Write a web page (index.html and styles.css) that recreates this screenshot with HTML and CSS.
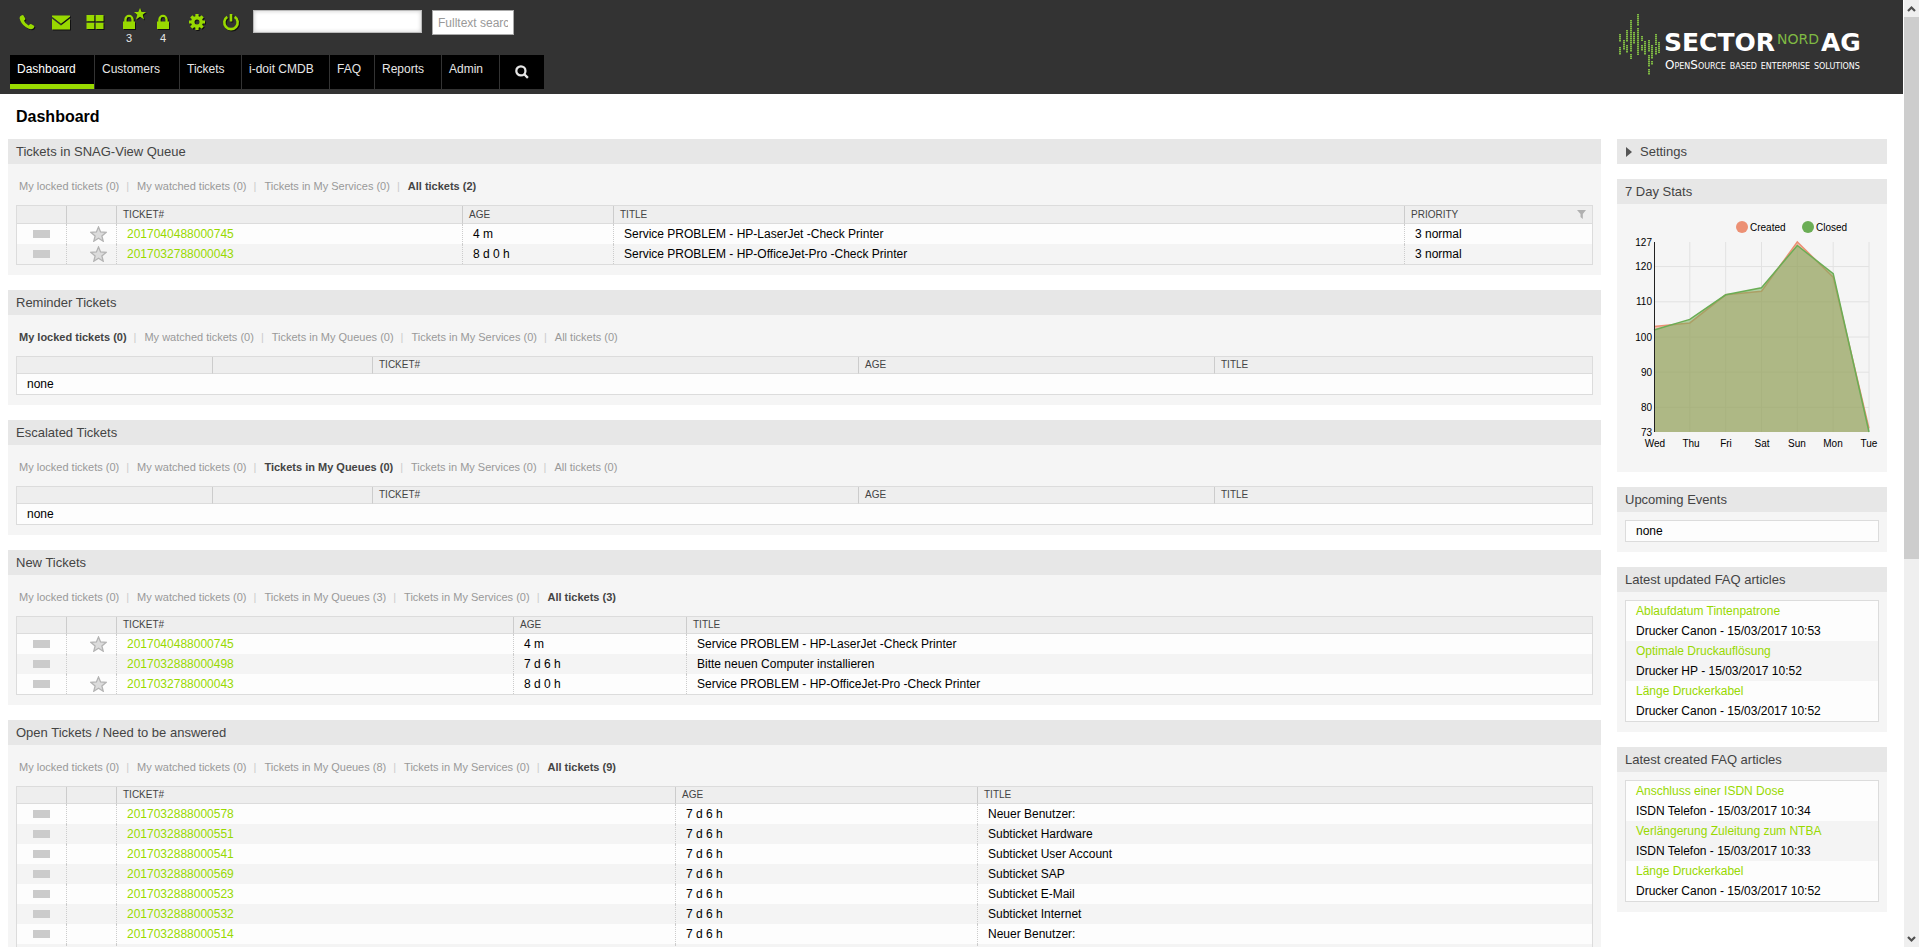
FILE: index.html
```html
<!DOCTYPE html>
<html lang="en">
<head>
<meta charset="utf-8">
<title>Dashboard</title>
<link rel="stylesheet" href="styles.css">
</head>
<body>
<svg class="defs" aria-hidden="true">
  <symbol id="star" viewBox="0 0 17 16"><path d="M8.500 1l2.100 5 5.400.4-4.100 3.500 1.300 5.300-4.700-2.900-4.700 2.900 1.300-5.300L1 6.400 6.400 6z" fill="#dcdcdc" stroke="#b3b3b3" stroke-width="1.300"/></symbol>
</svg>
<div class="window">
<div class="page">
  <header class="top">
    <div>
      <div class="toolbar">
        <a class="tool" href="#" aria-label="Phone"><svg viewBox="0 0 18 18"><path d="M2 3.500Q4.500 1 5.500 2.500l1.800 3q.6 1-1.300 2.300 1.300 3 4.600 4.600Q12 10.500 13 11l3 1.800q1 .7-.5 2.400-2 1.800-4.700.6Q4.500 13 2.300 7.500 1 5 2 3.500z"/></svg></a>
        <a class="tool" href="#" aria-label="Mail"><svg viewBox="0 0 18 18"><path d="M0 2.500h18v1.300l-9 7-9-7z"/><path d="M0 5.600l9 6.900 9-6.900V16.500H0z"/></svg></a>
        <a class="tool" href="#" aria-label="Overview"><svg viewBox="0 0 18 18"><path d="M.5 2h7.800v6.300H.5zM9.700 2h7.800v6.300H9.700zM.5 9.700h7.800V16H.5zM9.700 9.700h7.800V16H9.700z"/></svg></a>
        <a class="tool" href="#" aria-label="Locked tickets new"><svg viewBox="0 0 18 18"><path d="M3 8.500h1.300V6.500a4.700 4.700 0 0 1 9.400 0v2H15V16H3zM6.600 8.500h4.800V6.500a2.400 2.400 0 0 0-4.800 0z"/></svg><svg class="tool-star" viewBox="0 0 12 12"><path d="M6 0l1.700 4H12L8.700 6.800 10 11.500 6 8.800 2 11.500l1.300-4.700L0 4h4.300z"/></svg><span>3</span></a>
        <a class="tool" href="#" aria-label="Locked tickets"><svg viewBox="0 0 18 18"><path d="M3 8.500h1.300V6.500a4.700 4.700 0 0 1 9.400 0v2H15V16H3zM6.600 8.500h4.800V6.500a2.400 2.400 0 0 0-4.800 0z"/></svg><span>4</span></a>
        <a class="tool" href="#" aria-label="Preferences"><svg viewBox="0 0 18 18"><g fill="none" stroke="#98d900"><circle cx="9" cy="9" r="4.200" stroke-width="3.400"/><path d="M9 1v3M9 14v3M1 9h3M14 9h3M3.300 3.300l2.200 2.200M12.500 12.500l2.200 2.200M3.300 14.700l2.200-2.200M12.500 5.500l2.200-2.200" stroke-width="3.200"/></g></svg></a>
        <a class="tool" href="#" aria-label="Log out"><svg viewBox="0 0 18 18"><path d="M5.300 3.800A6.700 6.700 0 1 0 12.700 3.800M9 1v7.500" fill="none" stroke="#98d900" stroke-width="2.600"/></svg></a>
        <input class="search-main" type="text" aria-label="Search">
        <input class="search-full" type="text" placeholder="Fulltext search" aria-label="Fulltext search">
      </div>
      <nav class="nav">
        <a class="active" href="#">Dashboard</a><a href="#">Customers</a><a href="#">Tickets</a><a href="#">i-doit CMDB</a><a href="#">FAQ</a><a href="#">Reports</a><a href="#">Admin</a>
        <a class="nav-search" href="#" aria-label="Search"><svg viewBox="0 0 15 15"><g fill="none" stroke="#e6e6e6" stroke-width="2.400"><circle cx="6.300" cy="6.300" r="4.900"/><path d="M9.800 9.800l4 4"/></g></svg></a>
      </nav>
    </div>
    <svg class="logo" viewBox="0 0 244 66" role="img" aria-label="Sector Nord AG">
      <path fill="none" stroke="#7fb943" stroke-width="2" stroke-dasharray="1.400 .6" d="M1 22v8M1 35v8M5 28v10M8 18v12M8 33v8M12 8v32M12 42v5M15 20v12M19 2v12M19 16v27M23 24v5M23 33v6M26 29v14M30 28v12M30 43v12M30 57v6M33 33v14M33 49v4M37 22v11M37 35v8M40 30v11"/>
      <text class="logo-big" x="45" y="39">SECTOR</text>
      <text class="logo-nord" x="158" y="32">NORD</text>
      <text class="logo-big" x="202" y="39">AG</text>
      <text class="logo-line" x="46" y="57">OpenSource based enterprise solutions</text>
    </svg>
  </header>
  <h1>Dashboard</h1>
  <div class="columns">
    <main class="stack">
      <section class="widget">
        <h2>Tickets in SNAG-View Queue</h2>
        <div class="filters"><a href="#">My locked tickets (0)</a><a href="#">My watched tickets (0)</a><a href="#">Tickets in My Services (0)</a><a class="on" href="#">All tickets (2)</a></div>
        <table class="tickets queue">
          <colgroup><col class="flag"><col class="flag"><col class="num"><col class="age"><col><col class="prio"></colgroup>
          <thead><tr><th></th><th></th><th>TICKET#</th><th>AGE</th><th>TITLE</th><th><div class="sortable">PRIORITY<svg viewBox="0 0 9 9"><path d="M0 0h9L5.800 4v5L3.500 7V4z" fill="#b0b0b0"/></svg></div></th></tr></thead>
          <tbody>
            <tr><td><i class="bar"></i></td><td><svg class="star"><use href="#star"/></svg></td><td><a href="#">2017040488000745</a></td><td>4 m</td><td>Service PROBLEM - HP-LaserJet -Check Printer</td><td>3 normal</td></tr>
            <tr><td><i class="bar"></i></td><td><svg class="star"><use href="#star"/></svg></td><td><a href="#">2017032788000043</a></td><td>8 d 0 h</td><td>Service PROBLEM - HP-OfficeJet-Pro -Check Printer</td><td>3 normal</td></tr>
          </tbody>
        </table>
      </section>
      <section class="widget">
        <h2>Reminder Tickets</h2>
        <div class="filters"><a class="on" href="#">My locked tickets (0)</a><a href="#">My watched tickets (0)</a><a href="#">Tickets in My Queues (0)</a><a href="#">Tickets in My Services (0)</a><a href="#">All tickets (0)</a></div>
        <table class="tickets empty">
          <colgroup><col class="flag"><col class="flag2"><col class="num"><col class="age"><col></colgroup>
          <thead><tr><th></th><th></th><th>TICKET#</th><th>AGE</th><th>TITLE</th></tr></thead>
          <tbody><tr><td colspan="5">none</td></tr></tbody>
        </table>
      </section>
      <section class="widget">
        <h2>Escalated Tickets</h2>
        <div class="filters"><a href="#">My locked tickets (0)</a><a href="#">My watched tickets (0)</a><a class="on" href="#">Tickets in My Queues (0)</a><a href="#">Tickets in My Services (0)</a><a href="#">All tickets (0)</a></div>
        <table class="tickets empty">
          <colgroup><col class="flag"><col class="flag2"><col class="num"><col class="age"><col></colgroup>
          <thead><tr><th></th><th></th><th>TICKET#</th><th>AGE</th><th>TITLE</th></tr></thead>
          <tbody><tr><td colspan="5">none</td></tr></tbody>
        </table>
      </section>
      <section class="widget">
        <h2>New Tickets</h2>
        <div class="filters"><a href="#">My locked tickets (0)</a><a href="#">My watched tickets (0)</a><a href="#">Tickets in My Queues (3)</a><a href="#">Tickets in My Services (0)</a><a class="on" href="#">All tickets (3)</a></div>
        <table class="tickets new">
          <colgroup><col class="flag"><col class="flag"><col class="num"><col class="age"><col></colgroup>
          <thead><tr><th></th><th></th><th>TICKET#</th><th>AGE</th><th>TITLE</th></tr></thead>
          <tbody>
            <tr><td><i class="bar"></i></td><td><svg class="star"><use href="#star"/></svg></td><td><a href="#">2017040488000745</a></td><td>4 m</td><td>Service PROBLEM - HP-LaserJet -Check Printer</td></tr>
            <tr><td><i class="bar"></i></td><td></td><td><a href="#">2017032888000498</a></td><td>7 d 6 h</td><td>Bitte neuen Computer installieren</td></tr>
            <tr><td><i class="bar"></i></td><td><svg class="star"><use href="#star"/></svg></td><td><a href="#">2017032788000043</a></td><td>8 d 0 h</td><td>Service PROBLEM - HP-OfficeJet-Pro -Check Printer</td></tr>
          </tbody>
        </table>
      </section>
      <section class="widget">
        <h2>Open Tickets / Need to be answered</h2>
        <div class="filters"><a href="#">My locked tickets (0)</a><a href="#">My watched tickets (0)</a><a href="#">Tickets in My Queues (8)</a><a href="#">Tickets in My Services (0)</a><a class="on" href="#">All tickets (9)</a></div>
        <table class="tickets open">
          <colgroup><col class="flag"><col class="flag"><col class="num"><col class="age"><col></colgroup>
          <thead><tr><th></th><th></th><th>TICKET#</th><th>AGE</th><th>TITLE</th></tr></thead>
          <tbody>
            <tr><td><i class="bar"></i></td><td></td><td><a href="#">2017032888000578</a></td><td>7 d 6 h</td><td>Neuer Benutzer:</td></tr>
            <tr><td><i class="bar"></i></td><td></td><td><a href="#">2017032888000551</a></td><td>7 d 6 h</td><td>Subticket Hardware</td></tr>
            <tr><td><i class="bar"></i></td><td></td><td><a href="#">2017032888000541</a></td><td>7 d 6 h</td><td>Subticket User Account</td></tr>
            <tr><td><i class="bar"></i></td><td></td><td><a href="#">2017032888000569</a></td><td>7 d 6 h</td><td>Subticket SAP</td></tr>
            <tr><td><i class="bar"></i></td><td></td><td><a href="#">2017032888000523</a></td><td>7 d 6 h</td><td>Subticket E-Mail</td></tr>
            <tr><td><i class="bar"></i></td><td></td><td><a href="#">2017032888000532</a></td><td>7 d 6 h</td><td>Subticket Internet</td></tr>
            <tr><td><i class="bar"></i></td><td></td><td><a href="#">2017032888000514</a></td><td>7 d 6 h</td><td>Neuer Benutzer:</td></tr>
            <tr><td></td><td></td><td></td><td></td><td></td></tr>
          </tbody>
        </table>
      </section>
    </main>
    <aside class="stack side">
      <section class="widget closed">
        <h2><svg class="caret" viewBox="0 0 6 10"><path d="M0 0l6 5-6 5z" fill="#555"/></svg>Settings</h2>
      </section>
      <section class="widget chart">
        <h2>7 Day Stats</h2>
        <svg viewBox="0 0 270 268" role="img" aria-label="Tickets created and closed per day">
          <circle cx="125" cy="23" r="6" fill="#ec9074"/><text x="133" y="27">Created</text>
          <circle cx="191" cy="23" r="6" fill="#6bad55"/><text x="199" y="27">Closed</text>
          <path class="grid" d="M37 62.600H252M37 97.800H252M37 133H252M37 168.200H252M37 203.400H252M72.800 38V228M108.700 38V228M144.500 38V228M180.300 38V228M216.200 38V228M252 38V228"/>
          <path fill="#ec9074" fill-opacity=".5" d="M37 122.400L72.800 118.900 108.700 90.800 144.500 87.300 180.300 38 216.200 73.200 252 224.500V228H37z"/>
          <path fill="none" stroke="#ec9074" stroke-width="1.500" d="M37 122.400L72.800 118.900 108.700 90.800 144.500 87.300 180.300 38 216.200 73.200 252 224.500"/>
          <path fill="#6bad55" fill-opacity=".5" d="M37 126L72.800 115.400 108.700 90.800 144.500 83.700 180.300 41.500 216.200 69.700 252 228H37z"/>
          <path fill="none" stroke="#6bad55" stroke-width="1.500" d="M37 126L72.800 115.400 108.700 90.800 144.500 83.700 180.300 41.500 216.200 69.700 252 228"/>
          <path d="M37.500 38V228" stroke="#222"/>
          <g text-anchor="end"><text x="35" y="42">127</text><text x="35" y="66">120</text><text x="35" y="101">110</text><text x="35" y="137">100</text><text x="35" y="172">90</text><text x="35" y="207">80</text><text x="35" y="232">73</text></g>
          <g text-anchor="middle"><text x="38" y="243">Wed</text><text x="74" y="243">Thu</text><text x="109" y="243">Fri</text><text x="145" y="243">Sat</text><text x="180" y="243">Sun</text><text x="216" y="243">Mon</text><text x="252" y="243">Tue</text></g>
        </svg>
      </section>
      <section class="widget">
        <h2>Upcoming Events</h2>
        <ul class="list"><li>none</li></ul>
      </section>
      <section class="widget">
        <h2>Latest updated FAQ articles</h2>
        <ul class="list">
          <li><a href="#">Ablaufdatum Tintenpatrone</a><span>Drucker Canon - 15/03/2017 10:53</span></li>
          <li><a href="#">Optimale Druckauflösung</a><span>Drucker HP - 15/03/2017 10:52</span></li>
          <li><a href="#">Länge Druckerkabel</a><span>Drucker Canon - 15/03/2017 10:52</span></li>
        </ul>
      </section>
      <section class="widget">
        <h2>Latest created FAQ articles</h2>
        <ul class="list">
          <li><a href="#">Anschluss einer ISDN Dose</a><span>ISDN Telefon - 15/03/2017 10:34</span></li>
          <li><a href="#">Verlängerung Zuleitung zum NTBA</a><span>ISDN Telefon - 15/03/2017 10:33</span></li>
          <li><a href="#">Länge Druckerkabel</a><span>Drucker Canon - 15/03/2017 10:52</span></li>
        </ul>
      </section>
    </aside>
  </div>
</div>
<div class="scrollbar" aria-hidden="true">
  <svg viewBox="0 0 15 17"><path d="M4 11l3.500-3.500L11 11" fill="none" stroke="#505050" stroke-width="2.200"/></svg>
  <div class="track"><div class="thumb"></div></div>
  <svg viewBox="0 0 15 17"><path d="M4 7l3.500 3.500L11 7" fill="none" stroke="#505050" stroke-width="2.200"/></svg>
</div>
</div>
</body>
</html>
```
FILE: styles.css
```css
* { box-sizing: border-box; }

body {
  margin: 0;
  background: #fff;
  color: #000;
  font: 12px/20px "Liberation Sans", Arial, sans-serif;
}

a { color: #98d900; text-decoration: none; }

.defs { display: none; }

.window {
  display: flex;
  height: 100vh;
  overflow: hidden;
}

.page { flex: 1; min-width: 0; }

/* header */
.top {
  display: flex;
  justify-content: space-between;
  align-items: flex-start;
  height: 94px;
  padding: 10px 40px 0 10px;
  background: #333;
}

.toolbar {
  display: flex;
  align-items: flex-start;
  height: 45px;
}

.tool {
  position: relative;
  display: flex;
  flex-direction: column;
  align-items: center;
  width: 34px;
  padding-top: 3px;
  color: #e6e6e6;
  font-size: 11px;
  line-height: 15px;
}

.tool svg {
  width: 18px;
  height: 18px;
  fill: #98d900;
  filter: drop-shadow(1px 1px 0 #111);
}

.tool .tool-star {
  position: absolute;
  top: -2px;
  right: 0;
  width: 12px;
  height: 12px;
}

.search-main,
.search-full {
  border: 1px solid #aaa;
  background: #fff;
  font: 12px "Liberation Sans", Arial, sans-serif;
}

.search-main {
  width: 169px;
  height: 23px;
  margin-left: 5px;
  border: 1px solid #bbb;
  box-shadow: inset 0 0 4px #ccc;
}

.search-full {
  width: 82px;
  height: 25px;
  margin-left: 10px;
  padding: 0 5px;
}

.search-full::placeholder { color: #999; }

.nav {
  display: grid;
  grid-template-columns: 84px 85px 62px 88px 45px 67px 58px 45px;
  height: 34px;
  background: #000;
}

.nav a {
  padding: 4px 0 0 7px;
  border-left: 1px solid #333;
  color: #e6e6e6;
}

.nav .active {
  border-left: 0;
  border-bottom: 5px solid #98d900;
  color: #fff;
}

.nav .nav-search {
  display: flex;
  align-items: center;
  justify-content: center;
  padding: 0;
}

.nav-search svg { width: 14px; height: 14px; }

.logo { width: 244px; height: 66px; margin-top: 2px; }

.logo text { font-family: "DejaVu Sans", sans-serif; fill: #fff; }
.logo .logo-big { font-size: 25px; font-weight: bold; }
.logo .logo-nord { font-size: 14px; fill: #7fb943; }
.logo .logo-line { font-size: 12px; font-variant: small-caps; }

/* content */
h1 {
  margin: 0;
  padding: 13px 16px 12px;
  font-size: 16px;
  line-height: 20px;
}

.columns {
  display: flex;
  align-items: flex-start;
  gap: 16px;
  padding: 0 16px 0 8px;
}

.stack {
  display: flex;
  flex-direction: column;
  gap: 15px;
  flex: 1;
  min-width: 0;
}

.side { flex: 0 0 270px; }

.widget {
  padding-bottom: 10px;
  background: #f5f5f5;
}

.widget.closed,
.widget.chart { padding-bottom: 0; }

.widget h2 {
  margin: 0;
  padding: 0 8px;
  background: #e7e7e7;
  color: #444;
  font-size: 13px;
  font-weight: normal;
  line-height: 25px;
}

.caret {
  width: 6px;
  height: 10px;
  margin: 0 8px 0 1px;
  vertical-align: -1px;
}

.filters {
  display: flex;
  height: 41px;
  padding: 12px 11px 0;
  font-size: 11px;
}

.filters a { color: #999; }
.filters .on { color: #444; font-weight: bold; }

.filters a + a::before {
  content: "|";
  padding: 0 8px 0 7px;
  color: #ccc;
  font-weight: normal;
}

.tickets {
  width: calc(100% - 16px);
  margin: 0 8px;
  border: 1px solid #dcdcdc;
  border-spacing: 0;
  table-layout: fixed;
}

.tickets th {
  height: 17px;
  padding: 0 6px;
  border-right: 1px solid #ccc;
  border-bottom: 1px solid #dcdcdc;
  background: #eee;
  color: #444;
  font-size: 10px;
  font-weight: normal;
  line-height: 16px;
  text-align: left;
}

.tickets td {
  height: 20px;
  padding: 0 9px 0 10px;
  border-right: 1px dotted #ccc;
  line-height: 20px;
}

.tickets th:last-child,
.tickets td:last-child { border-right: 0; }

.tickets tbody tr:nth-child(odd) { background: #fdfdfd; }
.tickets tbody tr:nth-child(even) { background: #f4f4f4; }

.flag { width: 50px; }
.queue th { height: 18px; }
.queue .num { width: 346px; }
.queue .age { width: 151px; }
.queue .prio { width: 187px; }
.empty .flag { width: 196px; }
.empty .flag2 { width: 160px; }
.empty .num { width: 486px; }
.empty .age { width: 356px; }
.new .num { width: 397px; }
.new .age { width: 173px; }
.open .num { width: 559px; }
.open .age { width: 302px; }

.sortable {
  display: flex;
  align-items: center;
  justify-content: space-between;
}

.sortable svg { width: 9px; height: 9px; }

.bar {
  display: block;
  width: 17px;
  height: 8px;
  margin-left: 6px;
  background: #cbcbcb;
}

.star {
  display: block;
  width: 17px;
  height: 16px;
  margin-left: auto;
}

.chart svg {
  display: block;
  width: 100%;
  font-size: 10px;
}

.grid { fill: none; stroke: #e2e2e2; }

.list {
  margin: 8px 8px 0;
  padding: 0;
  border: 1px solid #dcdcdc;
  list-style: none;
}

.list li { padding: 0 10px; background: #fdfdfd; }
.list li:nth-child(even) { background: #f4f4f4; }
.list a, .list span { display: block; }

/* scroll bar */
.scrollbar {
  display: flex;
  flex-direction: column;
  flex: 0 0 16px;
  border-left: 1px solid #fff;
  background: #efefef;
}

.scrollbar svg { width: 15px; height: 17px; }
.track { flex: 1; }
.thumb { height: 59.4%; background: #cdcdcd; }
```
